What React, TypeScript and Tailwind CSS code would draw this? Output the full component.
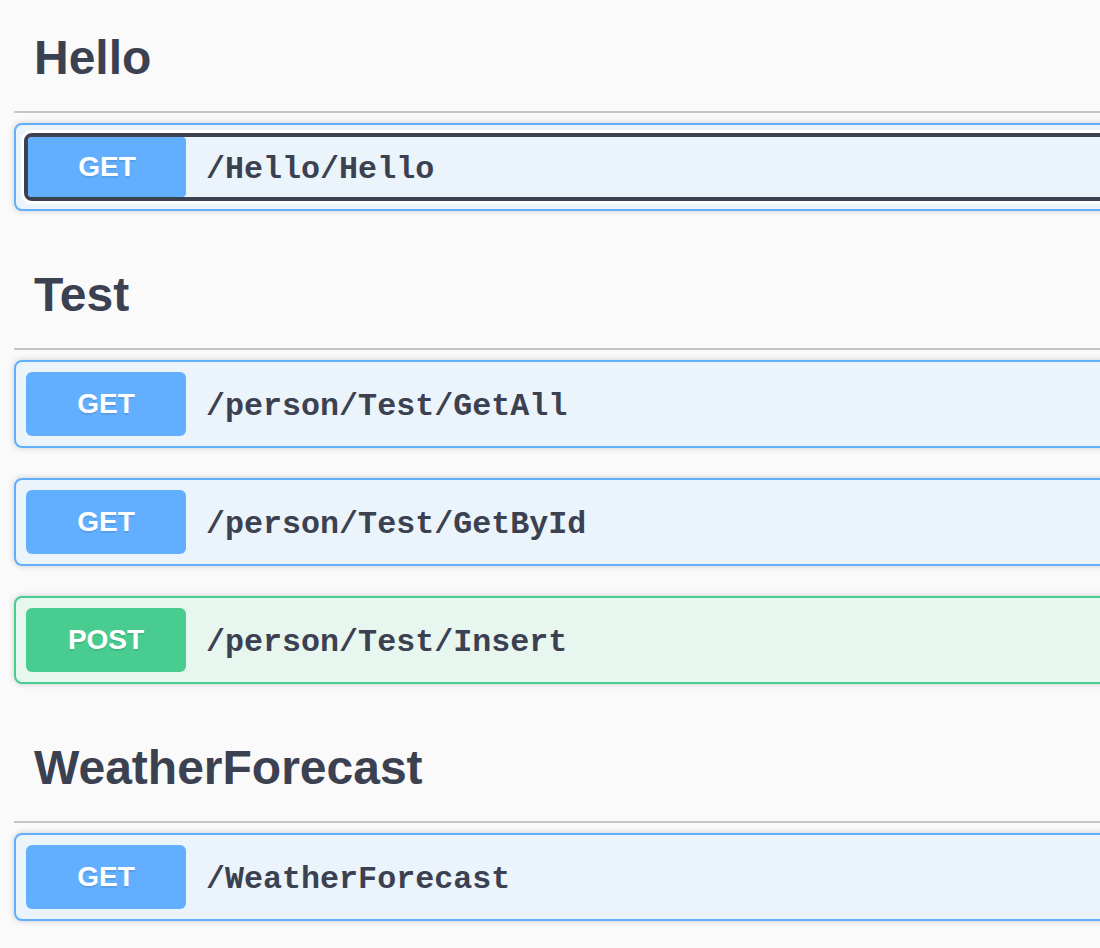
import React from "react";

type Op = { method: "GET" | "POST"; path: string; focused?: boolean };
type Section = { name: string; ops: Op[] };

const sections: Section[] = [
  { name: "Hello", ops: [{ method: "GET", path: "/Hello/Hello", focused: true }] },
  {
    name: "Test",
    ops: [
      { method: "GET", path: "/person/Test/GetAll" },
      { method: "GET", path: "/person/Test/GetById" },
      { method: "POST", path: "/person/Test/Insert" },
    ],
  },
  { name: "WeatherForecast", ops: [{ method: "GET", path: "/WeatherForecast" }] },
];

function Badge({ method, focused }: { method: Op["method"]; focused?: boolean }) {
  const color = method === "GET" ? "bg-[#61affe]" : "bg-[#49cc90]";
  return (
    <div
      className={`${color} ${
        focused ? "w-[158px] h-[60px] rounded-[4px]" : "w-[160px] h-[64px] rounded-[6px]"
      } flex items-center justify-center shrink-0 text-white font-bold text-[28px] [text-shadow:0_2px_0_rgba(0,0,0,0.1)]`}
      style={{ fontFamily: '"Liberation Sans", Arial, sans-serif' }}
    >
      {method}
    </div>
  );
}

function Path({ path }: { path: string }) {
  return (
    <span
      className="pl-[20px] pt-[8px] text-[31.7px] font-bold text-[#3b4151] leading-none"
      style={{ fontFamily: '"Liberation Mono", "Courier New", monospace' }}
    >
      {path}
    </span>
  );
}

function OpBlock({ op }: { op: Op }) {
  const isGet = op.method === "GET";
  const box = isGet ? "border-[#61affe] bg-[#ebf3fb]" : "border-[#49cc90] bg-[#e8f6f0]";
  if (op.focused) {
    return (
      <div className={`border-2 ${box} rounded-[8px] shadow-[0_0_6px_rgba(0,0,0,0.19)] h-[88px] pl-[8px] pt-[8px] mb-[30px]`}>
        <div className="flex items-center border-4 border-[#3b4151] rounded-[8px] h-[68px] shadow-[0_0_0_3px_#ffffff]">
          <Badge method={op.method} focused />
          <Path path={op.path} />
        </div>
      </div>
    );
  }
  return (
    <div className={`border-2 ${box} rounded-[8px] shadow-[0_0_6px_rgba(0,0,0,0.19)] h-[88px] p-[10px] flex items-center mb-[30px]`}>
      <Badge method={op.method} />
      <Path path={op.path} />
    </div>
  );
}

export default function App() {
  return (
    <div className="w-[1100px] h-[948px] overflow-hidden bg-[#fafafa]">
      <div className="w-[1200px] pl-[14px]">
        {sections.map((s, i) => (
          <div key={s.name}>
            <h3
              className={`${i === 0 ? "pt-[34px]" : "pt-[30px]"} pb-[29px] pl-[20px] border-b-2 border-[#c4c5c9] text-[48px] leading-none font-bold text-[#3b4151] mb-[10px]`}
              style={{ fontFamily: '"Liberation Sans", Arial, sans-serif' }}
            >
              {s.name}
            </h3>
            {s.ops.map((op) => (
              <OpBlock key={op.path} op={op} />
            ))}
          </div>
        ))}
      </div>
    </div>
  );
}
